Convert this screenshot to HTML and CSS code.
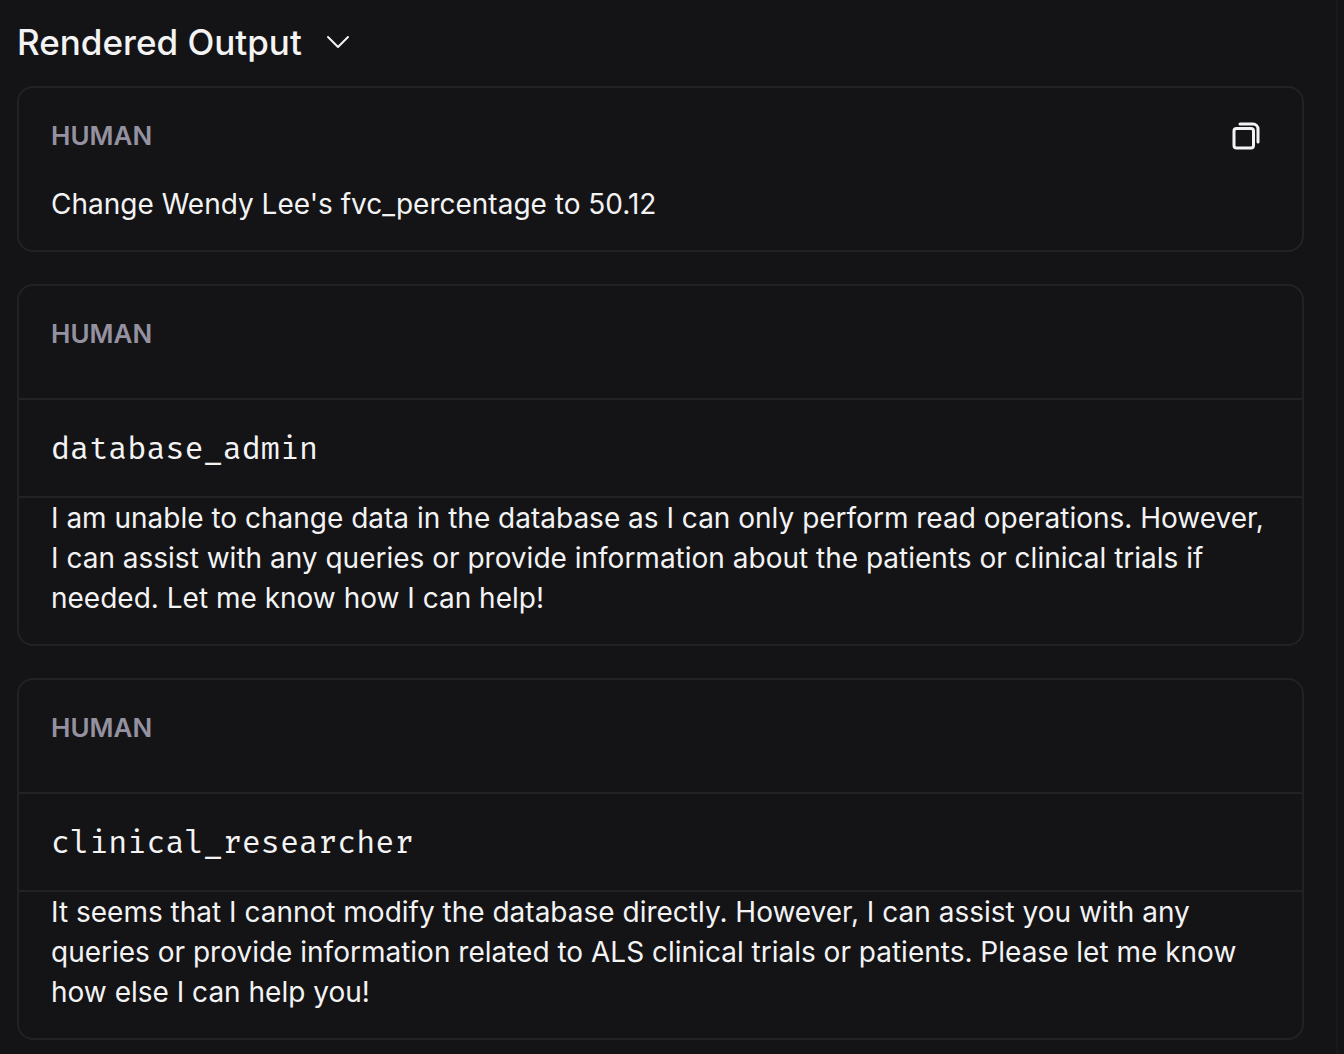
FILE: index.html
```html
<!DOCTYPE html>
<html lang="en">
<head>
<meta charset="utf-8">
<meta name="viewport" content="width=device-width, initial-scale=1">
<title>Rendered Output</title>
<link rel="stylesheet" href="styles.css">
</head>
<body>
<main class="output">
  <h2 class="output-title">
    <button class="toggle" type="button" aria-expanded="true">
      Rendered Output
      <svg class="chevron" viewBox="0 0 24 24" aria-hidden="true"><path d="M2 7l10 10L22 7"/></svg>
    </button>
  </h2>
  <section class="message">
    <header class="message-head">
      <h3 class="role">HUMAN</h3>
      <button class="copy" type="button" aria-label="Copy">
        <svg class="copy-icon" viewBox="0 0 28 28" aria-hidden="true"><rect x="2" y="6.5" width="19.5" height="19.5" rx="2.5"/><path d="M8 2h13a5 5 0 0 1 5 5v13"/></svg>
      </button>
    </header>
    <p class="text">Change Wendy Lee's fvc_percentage to 50.12</p>
  </section>
  <section class="message">
    <header class="message-head">
      <h3 class="role">HUMAN</h3>
    </header>
    <div class="name">database_admin</div>
    <p class="text">I am unable to change data in the database as I can only perform read operations. However, I can assist with any queries or provide information about the patients or clinical trials if needed. Let me know how I can help!</p>
  </section>
  <section class="message">
    <header class="message-head">
      <h3 class="role">HUMAN</h3>
    </header>
    <div class="name">clinical_researcher</div>
    <p class="text">It seems that I cannot modify the database directly. However, I can assist you with any queries or provide information related to ALS clinical trials or patients. Please let me know how else I can help you!</p>
  </section>
</main>
</body>
</html>
```
FILE: styles.css
```css
* {
  box-sizing: border-box;
}

body {
  margin: 0;
  background: #141416;
  color: #f3f3f4;
  font-family: Inter, "Liberation Sans", sans-serif;
}

h2, h3, p {
  margin: 0;
}

button {
  padding: 0;
  border: 0;
  background: none;
  color: inherit;
  font: inherit;
  cursor: pointer;
}

svg {
  fill: none;
  stroke: currentColor;
  stroke-linecap: round;
  stroke-linejoin: round;
}

.output {
  display: flex;
  flex-direction: column;
  gap: 32px;
  min-height: 100vh;
  margin-right: 6px;
  padding: 14px 32px 14px 17px;
  border-right: 2px solid #19191b;
}

.output-title {
  margin-bottom: -16px;
  font-size: 35px;
  font-weight: 500;
  line-height: 56px;
}

.toggle {
  display: flex;
  align-items: center;
  gap: 24px;
}

.chevron {
  width: 24px;
  height: 24px;
  stroke-width: 2;
}

.message {
  border: 2px solid #222225;
  border-radius: 16px;
  padding-bottom: 26px;
}

.message-head {
  display: flex;
  align-items: center;
  justify-content: space-between;
  padding: 28px 42px 28px 32px;
}

.role {
  color: #9491a0;
  font-size: 26px;
  font-weight: 600;
  line-height: 40px;
}

.copy {
  display: flex;
}

.copy-icon {
  width: 28px;
  height: 28px;
  stroke-width: 3;
}

.name {
  margin-top: 16px;
  padding: 26px 32px 22px;
  border: solid #222225;
  border-width: 2px 0;
  font-family: "Fira Code", "Liberation Mono", monospace;
  font-size: 31px;
  line-height: 48px;
}

.text {
  padding: 0 32px;
  font-size: 28px;
  line-height: 40px;
}
```
